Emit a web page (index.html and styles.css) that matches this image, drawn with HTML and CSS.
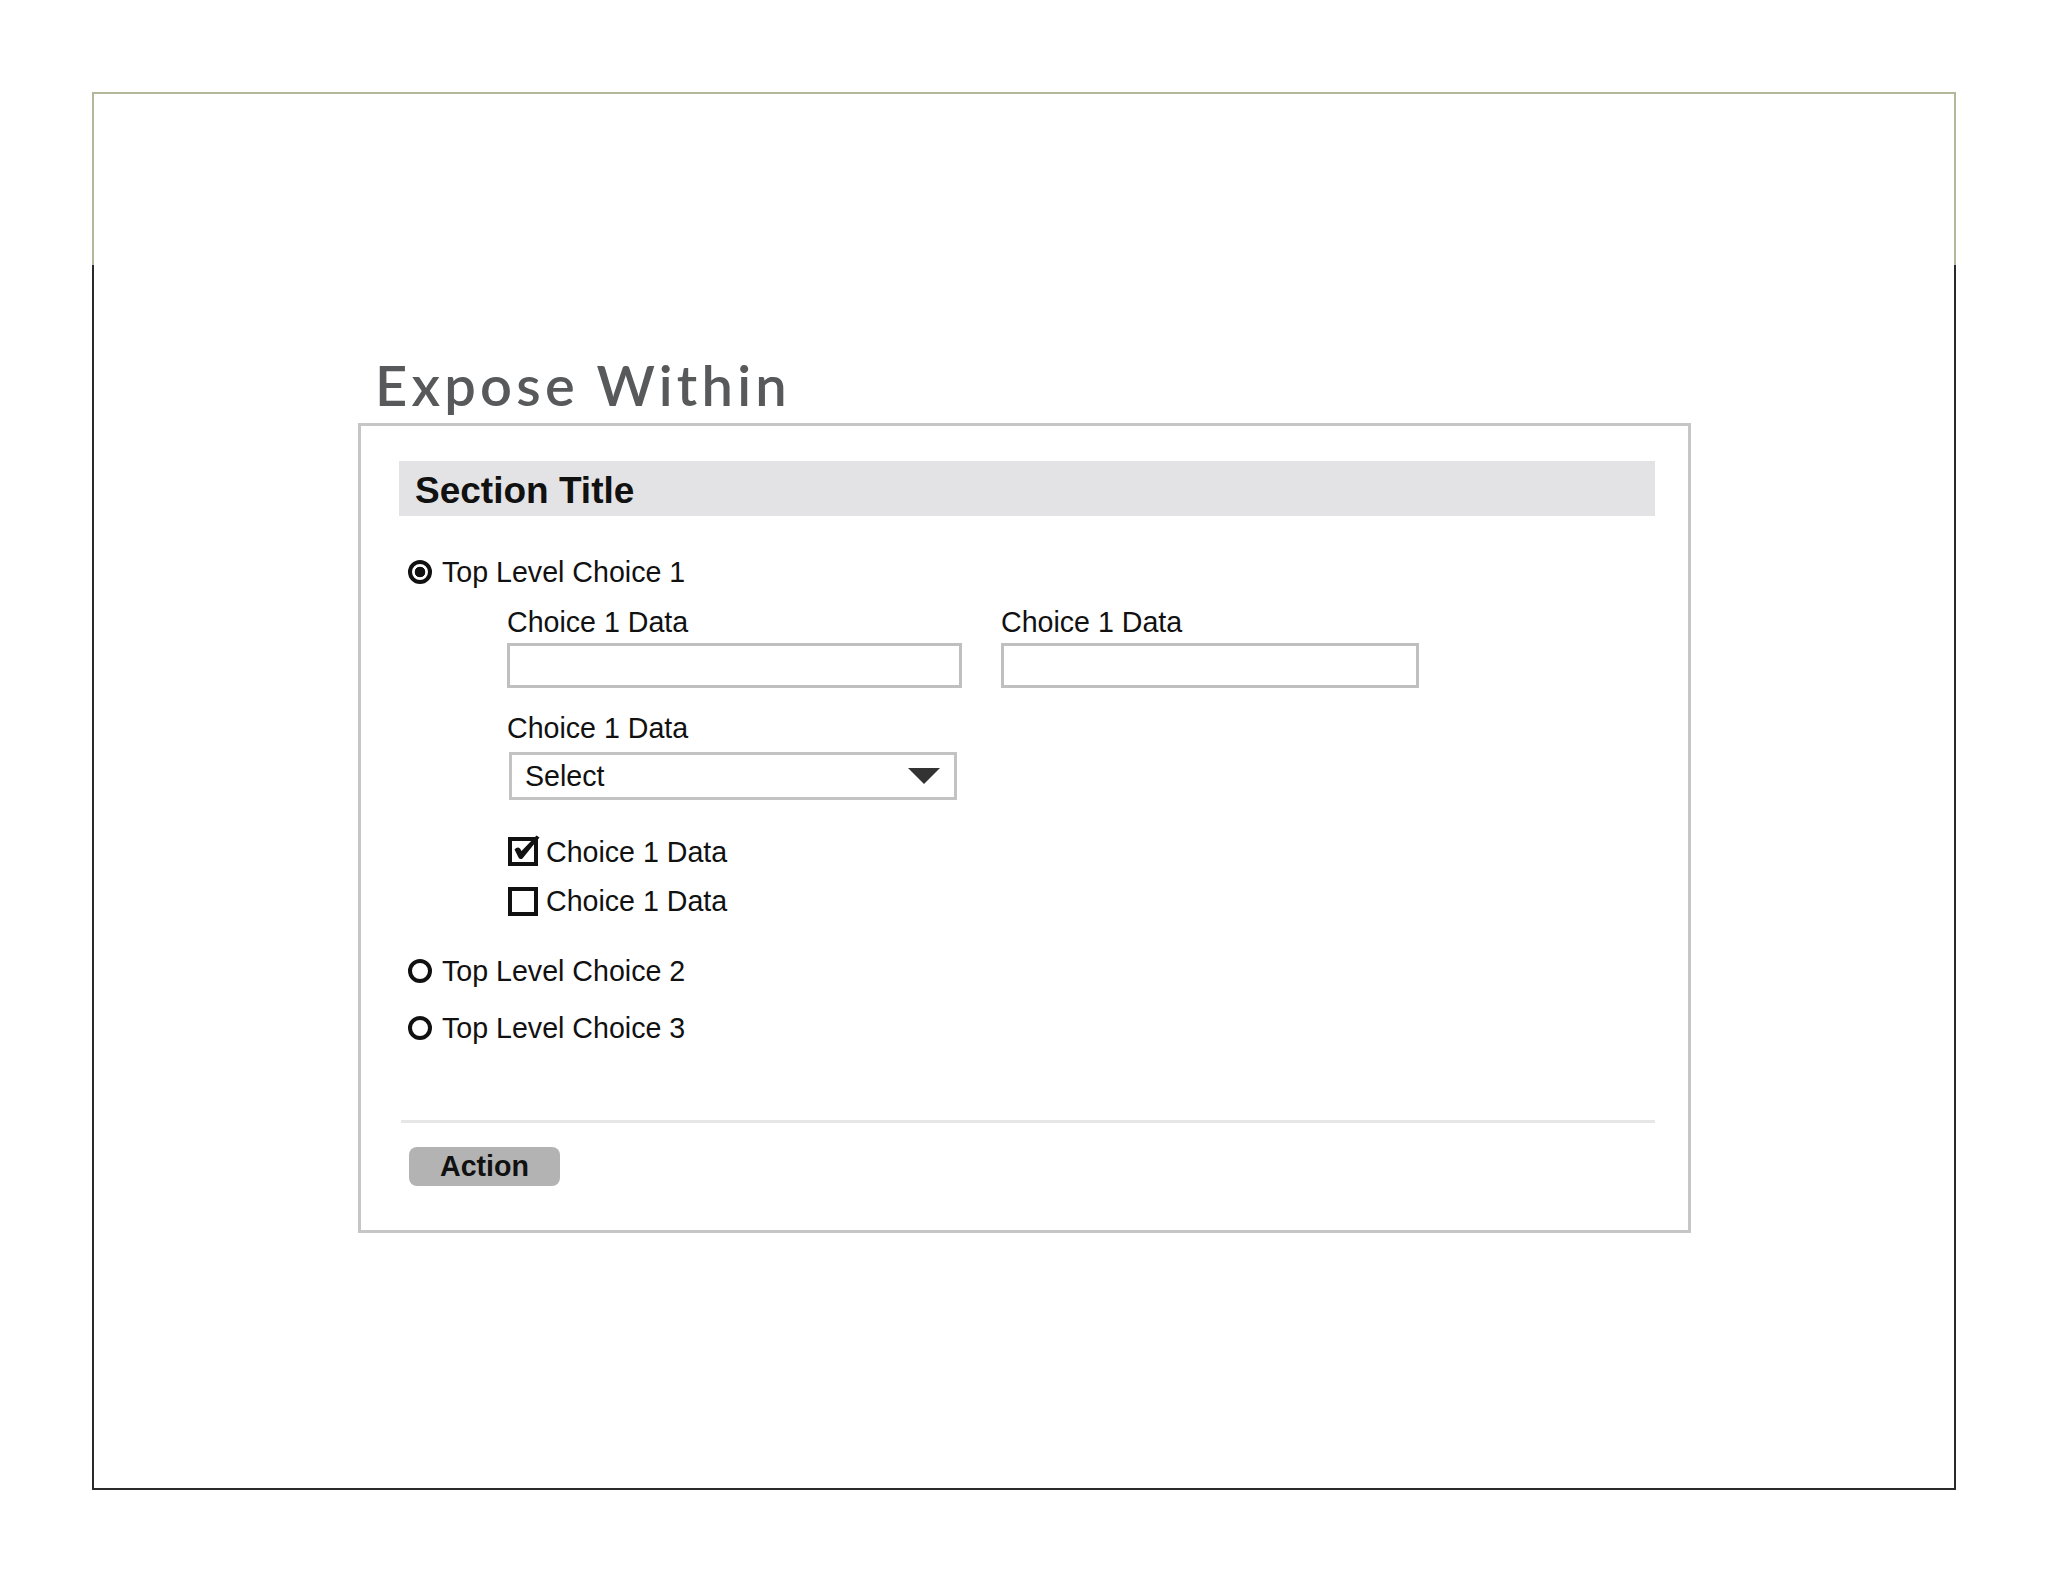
FILE: index.html
```html
<!DOCTYPE html>
<html lang="en">
  <head>
    <meta charset="UTF-8" />
    <title>Expose Within</title>
    <link rel="stylesheet" href="styles.css">
  </head>

  <body>
    <div class="slide">
      <h1 class="slide-title">Expose Within</h1>

      <div class="panel">
        <div class="section-title">Section Title</div>

        <div class="radio-row first">
          <span class="radio checked"></span>
          <span>Top Level Choice 1</span>
        </div>

        <div class="choice-body">
          <div class="field-row">
            <div class="field">
              <div class="field-label">Choice 1 Data</div>
              <input class="text-input wide" type="text" />
            </div>
            <div class="field">
              <div class="field-label">Choice 1 Data</div>
              <input class="text-input narrow" type="text" />
            </div>
          </div>

          <div class="field select-field">
            <div class="field-label">Choice 1 Data</div>
            <div class="select">
              <span>Select</span>
              <svg width="32" height="16" viewBox="0 0 32 16">
                <polygon points="0,0 32,0 16,16" fill="#333" />
              </svg>
            </div>
          </div>

          <div class="checks">
            <div class="check-row">
              <svg class="check-icon" width="32" height="31" viewBox="0 0 32 31">
                <rect x="2" y="4" width="26" height="25" fill="none" stroke="#111" stroke-width="4" />
                <path d="M6.5 14.5 Q9.5 11 12 13.5 L13.5 16 L28.5 0.5 L31.5 2.5 L14.5 23.5 Q12 25 10.5 22.5 Z" fill="#111" />
              </svg>
              <span>Choice 1 Data</span>
            </div>
            <div class="check-row">
              <span class="checkbox"></span>
              <span>Choice 1 Data</span>
            </div>
          </div>
        </div>

        <div class="radio-row second">
          <span class="radio"></span>
          <span>Top Level Choice 2</span>
        </div>
        <div class="radio-row third">
          <span class="radio"></span>
          <span>Top Level Choice 3</span>
        </div>

        <div class="panel-footer">
          <button class="action">Action</button>
        </div>
      </div>
    </div>
  </body>
</html>
```

FILE: styles.css
```css
* {
  box-sizing: border-box;
}

body {
  margin: 0;
  background: #fff;
  font-family: "Liberation Sans", Arial, sans-serif;
  color: #111;
}

.slide {
  width: 1864px;
  height: 1398px;
  margin: 92px 0 0 92px;
  padding: 263px 0 0 264px;
  border: 2px solid #2a2a2a;
  border-image: linear-gradient(#b4b79a 0 172px, #2a2a2a 172px) 1;
}

.slide-title {
  margin: 0 0 10px 17px;
  font-family: Lato, "Open Sans", sans-serif;
  font-size: 56px;
  font-weight: 600;
  line-height: 56px;
  letter-spacing: 4.2px;
  color: #58595b;
}

.panel {
  width: 1333px;
  border: 3px solid #c6c6c6;
  padding: 35px 33px 44px 38px;
}

.section-title {
  height: 55px;
  padding: 4px 0 0 16px;
  background: #e3e3e5;
  font-size: 37px;
  font-weight: bold;
  line-height: 51px;
}

/* radio rows */

.radio-row {
  display: flex;
  align-items: center;
  gap: 10px;
  padding-left: 9px;
  font-size: 28.6px;
  line-height: 34px;
}

.radio-row.first {
  margin-top: 39px;
}

.radio-row.second {
  margin-top: 36px;
}

.radio-row.third {
  margin-top: 23px;
}

.radio {
  width: 24px;
  height: 24px;
  border: 4px solid #111;
  border-radius: 50%;
}

.radio.checked {
  background: radial-gradient(circle, #111 0 5px, transparent 5.6px);
}

/* nested fields */

.choice-body {
  margin-left: 108px;
  font-size: 28.6px;
  line-height: 34px;
}

.field-row {
  display: flex;
  gap: 39px;
  margin-top: 16px;
}

.field-label {
  line-height: 34px;
}

.text-input {
  display: block;
  height: 45px;
  margin-top: 4px;
  border: 3px solid #bfbfbf;
  background: #fff;
  outline: none;
}

.text-input.wide {
  width: 455px;
}

.text-input.narrow {
  width: 418px;
}

.select-field {
  margin-top: 23px;
}

.select {
  display: flex;
  align-items: center;
  justify-content: space-between;
  width: 448px;
  height: 48px;
  margin: 7px 0 0 2px;
  padding: 0 14px 0 13px;
  border: 3px solid #c3c3c3;
}

.checks {
  display: flex;
  flex-direction: column;
  gap: 15px;
  margin-top: 35px;
}

.check-row {
  display: flex;
  align-items: center;
  gap: 8px;
  padding-left: 1px;
}

.check-icon {
  margin: -4px -2px 0 0;
}

.checkbox {
  width: 30px;
  height: 29px;
  border: 4px solid #111;
}

/* footer */

.panel-footer {
  margin: 75px 0 0 2px;
  padding: 24px 0 0 8px;
  border-top: 3px solid #e6e6e6;
}

.action {
  width: 151px;
  height: 39px;
  border: none;
  border-radius: 8px;
  background: #b3b3b3;
  font-family: "Liberation Sans", Arial, sans-serif;
  font-size: 28.6px;
  font-weight: bold;
  color: #111;
  padding: 0;
}
```
